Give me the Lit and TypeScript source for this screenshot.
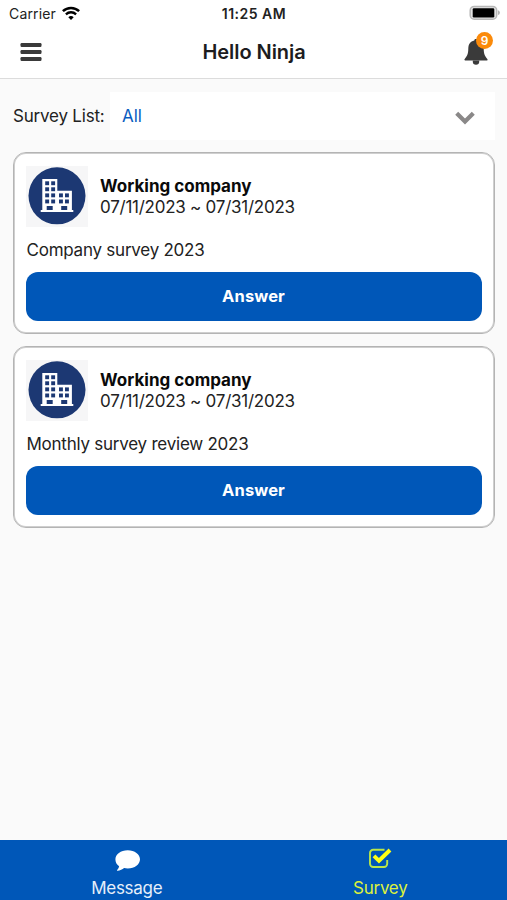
import { LitElement, html, css, svg } from "lit";
import { customElement, property } from "lit/decorators.js";
import { classMap } from "lit/directives/class-map.js";

interface Survey {
  company: string;
  period: string;
  title: string;
}

const surveys: Survey[] = [
  { company: "Working company", period: "07/11/2023 ~ 07/31/2023", title: "Company survey 2023" },
  { company: "Working company", period: "07/11/2023 ~ 07/31/2023", title: "Monthly survey review 2023" },
];

@customElement("status-bar")
export class StatusBar extends LitElement {
  static styles = css`
    :host {
      display: grid;
      grid-template-columns: 1fr auto 1fr;
      align-items: center;
      height: 27px;
      padding: 0 7px 0 9px;
      box-sizing: border-box;
      font-size: 14px;
      line-height: 27px;
      color: #222;
    }
    .left { display: flex; align-items: center; gap: 6px; }
    .left svg { margin-top: -2px; }
    .carrier { letter-spacing: 0.15px; }
    .time { font-weight: 600; font-size: 14px; letter-spacing: 0.5px; padding-top: 1px; margin-left: -1px; line-height: 26px; }
    .right { display: flex; justify-content: flex-end; margin-top: -1px; }
    svg { display: block; }
  `;
  render() {
    return html`
      <div class="left">
        <span class="carrier">Carrier</span>
        <svg width="18" height="14" viewBox="0 0 18 14" fill="none" stroke="#000">
          <path d="M0.9 5.2a11.6 11.6 0 0 1 16.2 0" stroke-width="2.5" />
          <path d="M3.9 8.3a7.4 7.4 0 0 1 10.2 0" stroke-width="2.3" />
          <path d="M9 14L6.3 11.2a3.9 3.9 0 0 1 5.4 0z" fill="#000" stroke="none" />
        </svg>
      </div>
      <span class="time">11:25 AM</span>
      <div class="right">
        <svg width="31" height="16" viewBox="0 0 31 16">
          <rect x="1.2" y="1.400" width="26.500" height="12.800" rx="4" fill="#e4e4e4" stroke="#b8b8b8" stroke-width="1.5" />
          <rect x="3.7" y="3.2" width="21.6" height="9.200" rx="1.2" fill="#000" />
          <path d="M29 5.3q1.900.7 1.900 2.400t-1.900 2.400z" fill="#b4b4b4" />
        </svg>
      </div>
    `;
  }
}

@customElement("app-header")
export class AppHeader extends LitElement {
  static styles = css`
    :host {
      display: grid;
      grid-template-columns: 1fr auto 1fr;
      align-items: center;
      height: 52px;
      padding: 0 14px 0 20px;
      box-sizing: border-box;
      border-bottom: 1px solid #dcdcdc;
    }
    svg { display: block; }
    .menu { margin-top: -1px; }
    .title {
      font-size: 20px;
      font-weight: 600;
      line-height: 24px;
      letter-spacing: -0.05px;
      color: #1c1c1e;
      margin: -2px 0 0 -5px;
    }
    .alerts { position: relative; justify-self: end; width: 30px; height: 30px; }
    .bell { position: absolute; left: 1px; top: 1px; }
    .badge {
      position: absolute;
      left: 13px;
      top: -6px;
      width: 17px;
      height: 17px;
      border-radius: 50%;
      background: #fb8a0a;
      color: #fff;
      font-size: 12px;
      font-weight: 600;
      line-height: 17px;
      text-align: center;
    }
  `;
  render() {
    return html`
      <svg class="menu" width="22" height="20" viewBox="0 0 22 20" fill="#3a3a3a">
        <rect x="0.5" y="1" width="21" height="4" rx="1.2" />
        <rect x="0.5" y="8" width="21" height="4" rx="1.2" />
        <rect x="0.5" y="15" width="21" height="4" rx="1.2" />
      </svg>
      <span class="title">Hello Ninja</span>
      <div class="alerts">
        <svg class="bell" width="24" height="26" viewBox="0 0 24 26" fill="#3a3a3a">
          <path d="M10.300 1.600a1.700 1.700 0 0 1 3.400 0C17.700 2.400 19.700 5.400 19.700 9.500c0 5.500 1.500 8.200 3.600 10.400.8 1-.1 1.600-.9 1.600H1.600c-.9 0-1.700-.6-.9-1.600C2.800 17.700 4.300 15 4.300 9.500c0-4.100 2-7.100 6-7.900z" />
          <path d="M8.800 21.500h6.400v1.300a3.200 3 0 0 1-6.400 0z" />
        </svg>
        <span class="badge">9</span>
      </div>
    `;
  }
}

const towerWindows = [15.3, 21.3, 27.4, 33.5].flatMap((y) => [[19.2, y], [25.2, y]]);
const wingWindows = [27.4, 33.5].flatMap((y) => [[33, y], [39, y]]);

@customElement("survey-card")
export class SurveyCard extends LitElement {
  @property({ attribute: false }) survey!: Survey;

  static styles = css`
    :host {
      display: flex;
      flex-direction: column;
      box-sizing: border-box;
      height: 182px;
      padding: 13px 12px 11px;
      border: 1px solid #b4b4b4;
      border-radius: 13px;
      background: #fff;
      box-shadow: inset 0 0 0 1px #cfcfcf;
    }
    .head { display: flex; align-items: center; gap: 12px; height: 62px; }
    .logo { display: block; flex: none; }
    .meta { font-size: 17px; line-height: 21px; color: #222; }
    .company { font-weight: 700; color: #0a0a0a; }
    .period { letter-spacing: -0.25px; }
    .title { font-size: 17px; line-height: 22px; margin-top: 11px; padding-left: 0.5px; letter-spacing: -0.24px; color: #222; }
    .answer {
      margin-top: 11px;
      height: 49px;
      border: 0;
      border-radius: 12px;
      background: #0057b8;
      color: #fff;
      font: 700 16.5px/49px Inter, sans-serif;
      letter-spacing: 0.1px;
      padding: 0 1px 0 0;
    }
  `;
  render() {
    return html`
      <div class="head">
        <svg class="logo" width="62" height="62" viewBox="0 0 62 62">
          <rect width="62" height="61" fill="#f6f6f7" />
          <circle cx="31" cy="29.800" r="28.500" fill="#1c3873" />
          <path d="M16.300 12.900h15v11.800h14.600v19.400h1.400v2H14.700v-2h1.600z" fill="#fff" />
          ${[...towerWindows, ...wingWindows].map(
            ([x, y]) => svg`<rect x=${x} y=${y} width="3.900" height="3.900" fill="#1c3873" />`
          )}
          <path d="M20.700 40h6v3.900h-6zM35.200 40h6v3.900h-6z" fill="#1c3873" />
        </svg>
        <div class="meta">
          <div class="company">${this.survey.company}</div>
          <div class="period">${this.survey.period}</div>
        </div>
      </div>
      <div class="title">${this.survey.title}</div>
      <button class="answer">Answer</button>
    `;
  }
}

@customElement("tab-item")
export class TabItem extends LitElement {
  @property() label = "";
  @property({ type: Boolean }) active = false;

  static styles = css`
    :host { display: block; flex: 1; }
    .tab {
      display: flex;
      flex-direction: column;
      align-items: center;
      padding-top: 7px;
      color: #e6effa;
      font-size: 17px;
      line-height: 22px;
    }
    .tab.active { color: #dcf13c; }
    .icon { display: flex; height: 30px; }
    .label { letter-spacing: -0.3px; }
    .active .label { letter-spacing: -0.25px; }
  `;
  render() {
    return html`
      <div class=${classMap({ tab: true, active: this.active })}>
        <span class="icon"><slot></slot></span>
        <span class="label">${this.label}</span>
      </div>
    `;
  }
}

@customElement("app-root")
export class AppRoot extends LitElement {
  static styles = css`
    :host {
      display: flex;
      flex-direction: column;
      height: 900px;
      background: #fafafa;
      font-family: Inter, "Liberation Sans", sans-serif;
      font-size: 17px;
      color: #222;
    }
    .top { background: #fff; }
    .content {
      flex: 1;
      display: flex;
      flex-direction: column;
      padding: 13px 12px 0 13px;
    }
    .filter { display: flex; align-items: center; height: 48px; }
    .filter-label { width: 97px; white-space: nowrap; line-height: 24px; letter-spacing: -0.2px; }
    .select {
      flex: 1;
      display: flex;
      align-items: center;
      justify-content: space-between;
      height: 48px;
      box-sizing: border-box;
      padding: 0 20px 0 12px;
      background: #fff;
      color: #0a5cc0;
    }
    .select svg { margin-top: 3px; }
    .list { display: flex; flex-direction: column; gap: 12px; margin-top: 12px; }
    .tabs { display: flex; height: 60px; background: #0057b8; }
    svg { display: block; }
  `;
  render() {
    return html`
      <div class="top">
        <status-bar></status-bar>
        <app-header></app-header>
      </div>
      <div class="content">
        <div class="filter">
          <span class="filter-label">Survey List:</span>
          <div class="select">
            <span>All</span>
            <svg width="20" height="14" viewBox="0 0 20 14" fill="none" stroke="#8a8888" stroke-width="4.200">
              <path d="M1.700 2.300L10 10.600L18.300 2.300" />
            </svg>
          </div>
        </div>
        <div class="list">
          ${surveys.map((s) => html`<survey-card .survey=${s}></survey-card>`)}
        </div>
      </div>
      <div class="tabs">
        <tab-item label="Message">
          <svg width="26" height="26" viewBox="0 0 26 26" fill="#fff">
            <path d="M13.700 3.200c7 0 12.300 4 12.300 9.100s-5.300 9.200-12.300 9.200c-1.300 0-2.500-.1-3.600-.4-1.700 1.500-4 2.500-6.600 2.700-.6 0-.7-.5-.3-.9 1-1 1.700-2.200 1.900-3.600C2.600 17.600 1.400 15 1.400 12.300c0-5.100 5.300-9.100 12.300-9.100z" />
          </svg>
        </tab-item>
        <tab-item label="Survey" active>
          <svg width="26" height="24" viewBox="0 0 26 24" fill="none">
            <path d="M17.500 2.800H6.200a3.200 3.200 0 0 0-3.200 3.200v10.800a3.200 3.200 0 0 0 3.200 3.200H17a3.200 3.200 0 0 0 3.200-3.200V13" stroke="#b9e648" stroke-width="1.900" />
            <path d="M7 8.800l5 5L23 3" stroke="#ffff14" stroke-width="4" />
          </svg>
        </tab-item>
      </div>
    `;
  }
}
